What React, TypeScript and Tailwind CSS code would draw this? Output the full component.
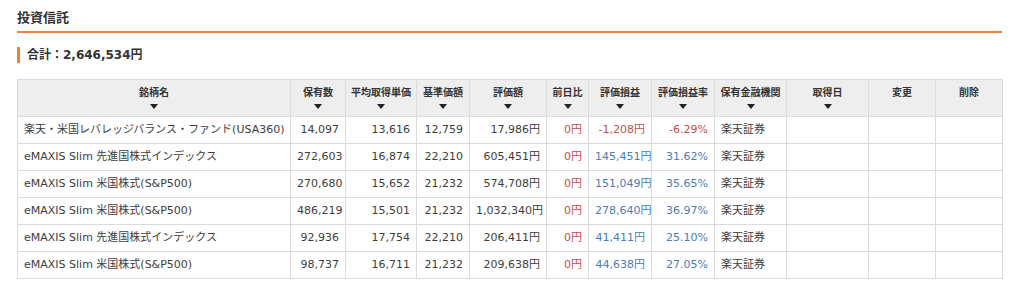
import React from "react";

type Row = {
  name: string;
  qty: string;
  avg: string;
  base: string;
  value: string;
  day: string;
  pl: string;
  rate: string;
  broker: string;
  gain: boolean;
};

const rows: Row[] = [
  { name: "楽天・米国レバレッジバランス・ファンド(USA360)", qty: "14,097", avg: "13,616", base: "12,759", value: "17,986円", day: "0円", pl: "-1,208円", rate: "-6.29%", broker: "楽天証券", gain: false },
  { name: "eMAXIS Slim 先進国株式インデックス", qty: "272,603", avg: "16,874", base: "22,210", value: "605,451円", day: "0円", pl: "145,451円", rate: "31.62%", broker: "楽天証券", gain: true },
  { name: "eMAXIS Slim 米国株式(S&P500)", qty: "270,680", avg: "15,652", base: "21,232", value: "574,708円", day: "0円", pl: "151,049円", rate: "35.65%", broker: "楽天証券", gain: true },
  { name: "eMAXIS Slim 米国株式(S&P500)", qty: "486,219", avg: "15,501", base: "21,232", value: "1,032,340円", day: "0円", pl: "278,640円", rate: "36.97%", broker: "楽天証券", gain: true },
  { name: "eMAXIS Slim 先進国株式インデックス", qty: "92,936", avg: "17,754", base: "22,210", value: "206,411円", day: "0円", pl: "41,411円", rate: "25.10%", broker: "楽天証券", gain: true },
  { name: "eMAXIS Slim 米国株式(S&P500)", qty: "98,737", avg: "16,711", base: "21,232", value: "209,638円", day: "0円", pl: "44,638円", rate: "27.05%", broker: "楽天証券", gain: true },
];

const headers: { label: string; w: number; sort: boolean }[] = [
  { label: "銘柄名", w: 273, sort: true },
  { label: "保有数", w: 55, sort: true },
  { label: "平均取得単価", w: 71, sort: true },
  { label: "基準価額", w: 53, sort: true },
  { label: "評価額", w: 77, sort: true },
  { label: "前日比", w: 42, sort: true },
  { label: "評価損益", w: 63, sort: true },
  { label: "評価損益率", w: 63, sort: true },
  { label: "保有金融機関", w: 72, sort: true },
  { label: "取得日", w: 82, sort: true },
  { label: "変更", w: 67, sort: false },
  { label: "削除", w: 67, sort: false },
];

function Arrow() {
  return (
    <svg width="8" height="5" viewBox="0 0 8 5" className="mx-auto mt-[4px] block">
      <path d="M0 0 H8 L4 5 Z" fill="#222" />
    </svg>
  );
}

export default function App() {
  const td = "border border-[#dcdcdc] h-[27px] px-[6px] py-0 text-[11px] whitespace-nowrap";
  return (
    <div
      className="bg-white w-[1024px] h-[295px] px-[17px] pt-[9px] text-[#3d3d3d]"
      style={{ fontFamily: '"DejaVu Sans", "Noto Sans CJK JP", sans-serif' }}
    >
      <h2 className="text-[13px] font-bold leading-[18px] pb-[4px] border-b-2 border-[#e8833a] w-[985px] text-[#333]">
        投資信託
      </h2>
      <div className="mt-[14px] border-l-[3px] border-[#e8833a] pl-[7px] h-[16px] text-[12px] font-bold leading-[16px] text-[#333]">
        合計：2,646,534円
      </div>
      <table className="mt-[16px] w-[985px] table-fixed border-collapse">
        <colgroup>
          {headers.map((h) => (
            <col key={h.label} style={{ width: h.w }} />
          ))}
        </colgroup>
        <thead>
          <tr>
            {headers.map((h) => (
              <th
                key={h.label}
                className="border border-[#dcdcdc] bg-[#eeeeee] h-[37px] align-top pt-[6px] px-0 text-[10px] font-bold leading-[14px] text-[#333]"
              >
                {h.label}
                {h.sort && <Arrow />}
              </th>
            ))}
          </tr>
        </thead>
        <tbody>
          {rows.map((r, i) => {
            const tone = r.gain ? "text-[#4a7dba]" : "text-[#c5504b]";
            return (
              <tr key={i}>
                <td className={`${td} text-left`}>{r.name}</td>
                <td className={`${td} text-right`}>{r.qty}</td>
                <td className={`${td} text-right`}>{r.avg}</td>
                <td className={`${td} text-right`}>{r.base}</td>
                <td className={`${td} text-right`}>{r.value}</td>
                <td className={`${td} text-right text-[#c5504b]`}>{r.day}</td>
                <td className={`${td} text-right ${tone}`}>{r.pl}</td>
                <td className={`${td} text-right ${tone}`}>{r.rate}</td>
                <td className={`${td} text-left`}>{r.broker}</td>
                <td className={td}></td>
                <td className={td}></td>
                <td className={td}></td>
              </tr>
            );
          })}
        </tbody>
      </table>
    </div>
  );
}
